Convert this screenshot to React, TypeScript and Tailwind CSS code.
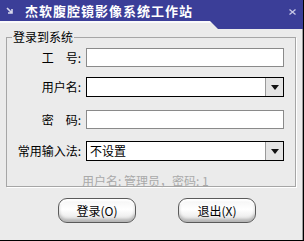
import React from "react";

const font = { fontFamily: '"Noto Sans CJK SC", "Noto Sans", sans-serif' };

function TextBox() {
  return <div className="h-[19px] w-[198px] bg-white border border-[#8a8a8a]" />;
}

function Combo({ value = "" }: { value?: string }) {
  return (
    <div className="flex h-[20px] w-[198px] items-stretch bg-white border border-black">
      <div className="flex-1 pl-[3px] text-[12px] leading-[18px] text-black">{value}</div>
      <div className="flex w-[18px] items-center justify-center bg-[#e4e4e4] border-l border-[#9a9a9a]">
        <svg width="8" height="5" viewBox="0 0 8 5">
          <path d="M0 0H8L4 5Z" fill="#111" />
        </svg>
      </div>
    </div>
  );
}

function Row({ label, children, className = "" }: { label: string; children: React.ReactNode; className?: string }) {
  return (
    <div className={"flex items-center " + className}>
      <div className="w-[74px] text-right text-[12px] leading-[16px] text-black whitespace-pre">{label}</div>
      <div className="ml-[5px]">{children}</div>
    </div>
  );
}

function GlossButton({ text }: { text: string }) {
  return (
    <button
      className="h-[25px] w-[78px] rounded-[9px] border border-[#5a5a5a] text-[12px] text-black shadow-[inset_0_2px_2px_#ffffff,inset_0_-3px_3px_#b4b4b4] bg-[linear-gradient(#f4f4f4,#ffffff_45%,#e2e2e2)]"
      style={font}
    >
      {text}
    </button>
  );
}

export default function App() {
  return (
    <div className="relative h-[241px] w-[304px] overflow-hidden bg-[#ebebeb] border-r border-b border-black" style={font}>
      {/* title bar */}
      <div className="flex h-[21px] items-center bg-[#3b3e98]">
        <svg className="ml-[6px]" width="8" height="8" viewBox="0 0 8 8">
          <path d="M1 1L6 6M6 2V6H2" stroke="#d8d8ec" strokeWidth="1.6" fill="none" />
        </svg>
        <span className="ml-[11px] text-[13px] font-bold leading-none tracking-[1px] text-white">
          杰软腹腔镜影像系统工作站
        </span>
      </div>
      {/* hanging tab on the right */}
      <div className="absolute left-[210px] top-[21px] h-[8px] w-[94px] bg-[#3b3e98] [clip-path:polygon(0_0,100%_0,100%_100%,8px_100%)]" />
      <svg className="absolute left-[289px] top-[9px]" width="7" height="6" viewBox="0 0 7 6">
        <path d="M0.5 0.5L6.5 5.5M6.5 0.5L0.5 5.5" stroke="#c9c9e6" strokeWidth="1.3" />
      </svg>
      <div className="h-[2px] bg-[#fafafa]" />

      <div className="flex h-[217px] border-r border-[#9c9c9c] pr-[6px]">
        <div className="flex-1 pl-[6px]">
          <fieldset className="mt-[7px] h-[157px] border border-[#a6a6a6] shadow-[1px_1px_0_#ffffff] px-0">
            <legend className="ml-[5px] px-[1px] text-[12px] leading-[14px] text-black">登录到系统</legend>
            <Row label={"工　号:"} className="mt-[4px]">
              <TextBox />
            </Row>
            <Row label="用户名:" className="mt-[10px]">
              <Combo />
            </Row>
            <Row label={"密　码:"} className="mt-[13px]">
              <TextBox />
            </Row>
            <Row label="常用输入法:" className="mt-[12px]">
              <Combo value="不设置" />
            </Row>
            <div className="mt-[13px] pl-[75px] text-[12px] leading-[14px] text-[#a9a9a9]">用户名: 管理员，密码: 1</div>
          </fieldset>
          <div className="mt-[11px] flex gap-[42px] pl-[52px]">
            <GlossButton text="登录(O)" />
            <GlossButton text="退出(X)" />
          </div>
        </div>
      </div>
    </div>
  );
}
